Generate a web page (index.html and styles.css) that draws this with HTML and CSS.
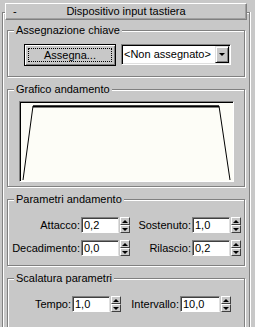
FILE: index.html
```html
<!DOCTYPE html>
<html lang="it">
<head>
    <meta charset="UTF-8">
    <title>Dispositivo input tastiera</title>
    <link rel="stylesheet" href="styles.css">
</head>
<body>
    <div class="rollout">
        <div class="rollout-head">
            <span class="toggle">-</span>
            <span class="head-title">Dispositivo input tastiera</span>
            <span></span>
        </div>

        <div class="group">
            <div class="group-title">Assegnazione chiave</div>
            <div class="key-row">
                <button class="btn"><span class="focus">Assegna...</span></button>
                <div class="combo">
                    <span class="combo-text">&lt;Non assegnato&gt;</span>
                    <span class="combo-arrow"></span>
                </div>
            </div>
        </div>

        <div class="group group-graph">
            <div class="group-title">Grafico andamento</div>
            <div class="graph">
                <svg width="213" height="79" viewBox="0 0 213 79">
                    <polyline points="3,78 13,4 199,4 210,78" fill="none" stroke="#000" stroke-width="1"/>
                    <line x1="13" y1="4.5" x2="199" y2="4.5" stroke="#000" stroke-width="2"/>
                </svg>
            </div>
        </div>

        <div class="group group-params">
            <div class="group-title">Parametri andamento</div>
            <div class="row">
                <div class="field">
                    <label class="lbl-a">Attacco:</label>
                    <span class="box">0,2</span>
                    <span class="spin"><i class="up"></i><i class="dn"></i></span>
                </div>
                <div class="field">
                    <label class="lbl-b">Sostenuto:</label>
                    <span class="box">1,0</span>
                    <span class="spin"><i class="up"></i><i class="dn"></i></span>
                </div>
            </div>
            <div class="row">
                <div class="field">
                    <label class="lbl-a">Decadimento:</label>
                    <span class="box">0,0</span>
                    <span class="spin"><i class="up"></i><i class="dn"></i></span>
                </div>
                <div class="field">
                    <label class="lbl-b">Rilascio:</label>
                    <span class="box">0,2</span>
                    <span class="spin"><i class="up"></i><i class="dn"></i></span>
                </div>
            </div>
        </div>

        <div class="group group-scale">
            <div class="group-title">Scalatura parametri</div>
            <div class="row">
                <div class="field">
                    <label class="lbl-c">Tempo:</label>
                    <span class="box">1,0</span>
                    <span class="spin"><i class="up"></i><i class="dn"></i></span>
                </div>
                <div class="field">
                    <label class="lbl-d">Intervallo:</label>
                    <span class="box box-wide">10,0</span>
                    <span class="spin"><i class="up"></i><i class="dn"></i></span>
                </div>
            </div>
        </div>
    </div>
</body>
</html>
```

FILE: styles.css
```css
*{
    margin: 0;
    padding: 0;
    box-sizing: border-box;
    font-family: "Liberation Sans", Arial, sans-serif;
    font-size: 11px;
    color: #000;
}

body{
    background-color: #c8c8c8;
    padding-top: 12px;
    overflow: hidden;
}

/* the panel runs on past the bottom of the window */
.rollout{
    margin: 0 5px 0 2px;
    height: 315px;
    border: 1px solid #808080;
    border-bottom: 0;
    box-shadow: inset 1px 1px 0 #fff, 1px 0 0 #fff;
}

.rollout-head{
    display: grid;
    grid-template-columns: 1fr auto 1fr;
    align-items: center;
    height: 17px;
    margin: -10px 2px 0 2px;
    background-color: #c8c8c8;
    border: 1px solid;
    border-color: #fff #808080 #808080 #fff;
    box-shadow: inset -1px -1px 0 #a0a0a0;
    line-height: 13px;
}

.toggle{
    padding-left: 7px;
}

.group{
    margin: 10px 4px 0 4px;
    border: 1px solid #808080;
    box-shadow: inset 1px 1px 0 #fff, 1px 1px 0 #fff;
    padding-bottom: 10px;
}

.group + .group{
    margin-top: 12px;
}

.group-title{
    width: fit-content;
    margin: -7px 0 0 6px;
    padding: 0 2px;
    line-height: 13px;
    background-color: #c8c8c8;
}

/* Assegnazione chiave */
.key-row{
    display: flex;
    gap: 5px;
    margin-top: 7px;
    padding-left: 16px;
}

.btn{
    width: 92px;
    height: 22px;
    padding: 3px;
    background-color: #c8c8c8;
    border: 1px solid #000;
    box-shadow: inset 1px 1px 0 #fff, inset -1px -1px 0 #808080;
    display: flex;
}

.focus{
    flex: 1;
    border: 1px dotted #000;
    line-height: 12px;
    text-align: center;
}

.combo{
    display: flex;
    width: 110px;
    height: 21px;
    padding: 1px;
    background-color: #fff;
    border: 1px solid;
    border-color: #808080 #fff #fff #808080;
    box-shadow: inset 1px 1px 0 #000, inset -1px -1px 0 #dfdfdf;
}

.combo-text{
    flex: 1;
    padding-left: 1px;
    line-height: 17px;
}

.combo-arrow{
    width: 14px;
    height: 17px;
    background-color: #c8c8c8;
    border: 1px solid;
    border-color: #dfdfdf #000 #000 #dfdfdf;
    box-shadow: inset 1px 1px 0 #fff, inset -1px -1px 0 #808080;
    display: flex;
    align-items: center;
    justify-content: center;
}

.combo-arrow::after{
    content: "";
    border-left: 3px solid transparent;
    border-right: 3px solid transparent;
    border-top: 3px solid #000;
}

/* Grafico */
.group-graph{
    padding-bottom: 4px;
}

.graph{
    width: 215px;
    height: 81px;
    margin: 5px 0 0 11px;
    background-color: #fdfdf7;
    border: 1px solid;
    border-color: #808080 #fff #fff #808080;
    box-shadow: inset 1px 1px 0 #000;
}

.graph svg{
    display: block;
}

/* Parametri */
.group-params{
    padding-bottom: 9px;
}

.group-scale{
    padding-bottom: 30px;
}

.row{
    display: flex;
    margin-top: 11px;
}

.row + .row{
    margin-top: 7px;
}

.field{
    display: flex;
    align-items: center;
    height: 16px;
}

.field label{
    text-align: right;
    padding-right: 1px;
}

.lbl-a{ width: 73px; }
.lbl-b{ width: 62px; }
.lbl-c{ width: 64px; }
.lbl-d{ width: 59px; }

.box{
    width: 38px;
    height: 16px;
    padding-left: 2px;
    line-height: 14px;
    background-color: #fff;
    border: 1px solid;
    border-color: #808080 #dfdfdf #fff #808080;
    box-shadow: inset 1px 1px 0 #404040;
}

.box-wide{
    width: 40px;
}

.spin{
    display: flex;
    flex-direction: column;
    width: 10px;
    height: 16px;
    margin-left: 1px;
}

.spin i{
    flex: 1;
    display: flex;
    align-items: center;
    justify-content: center;
    background-color: #c8c8c8;
    border: 1px solid;
    border-color: #fff #404040 #404040 #fff;
}

.spin i::after{
    content: "";
    border-left: 3px solid transparent;
    border-right: 3px solid transparent;
}

.spin .up::after{
    border-bottom: 3px solid #000;
}

.spin .dn::after{
    border-top: 3px solid #000;
}
```
